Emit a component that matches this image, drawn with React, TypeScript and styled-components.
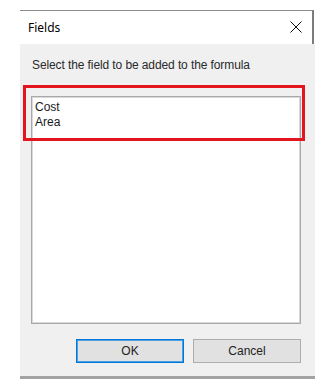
import React from "react";
import styled, { createGlobalStyle } from "styled-components";

const Global = createGlobalStyle`
  html, body { margin: 0; padding: 0; background: #ffffff; }
  body { width: 327px; height: 389px; overflow: hidden; }
`;

const Window = styled.div`
  margin: 10px 0 0 20px;
  width: 295px;
  display: flex;
  flex-direction: column;
`;

const TitleBar = styled.div`
  box-sizing: border-box;
  width: 294px;
  height: 34px;
  background: #ffffff;
  border-top: 1px solid #8c8c8c;
  border-right: 2px solid #7c7c7c;
  display: flex;
  align-items: flex-start;
  justify-content: space-between;
  padding: 8px 10px 0 8px;
`;

const Title = styled.span`
  font-family: "Noto Sans", "Liberation Sans", sans-serif;
  font-size: 12px;
  line-height: 17px;
  color: #000000;
`;

const CloseIcon = styled.svg`
  display: block;
  margin-top: 2px;
`;

const Body = styled.div`
  position: relative;
  box-sizing: border-box;
  height: 335px;
  background: #f0f0f0;
  border-bottom: 3px solid #a3a3a3;
  display: flex;
  flex-direction: column;
  padding: 15px 14px 0 11px;
`;

const Prompt = styled.div`
  font-family: "Liberation Sans", Arial, sans-serif;
  font-size: 12px;
  letter-spacing: -0.1px;
  line-height: 13px;
  color: #2a2a2a;
  padding-left: 1px;
`;

const ListBox = styled.div`
  box-sizing: border-box;
  margin-top: 24px;
  width: 270px;
  height: 228px;
  background: #ffffff;
  border: 1px solid #a9a9a9;
  box-shadow: inset 0 0 0 1px #d9d9d9;
  padding: 3px 3px;
  display: flex;
  flex-direction: column;
`;

const ListItem = styled.div`
  font-family: "Liberation Sans", Arial, sans-serif;
  font-size: 12px;
  line-height: 15px;
  color: #1a1a1a;
`;

const ButtonRow = styled.div`
  display: flex;
  justify-content: flex-end;
  gap: 9px;
  margin-top: 15px;
  width: 270px;
`;

const Button = styled.button<{ $default?: boolean }>`
  box-sizing: border-box;
  width: 108px;
  height: 24px;
  margin: 0;
  padding: 0;
  background: #e1e1e1;
  border: 1px solid ${(p) => (p.$default ? "#0078d7" : "#adadad")};
  box-shadow: ${(p) => (p.$default ? "inset 0 0 0 1px #4aa0e3" : "none")};
  font-family: "Liberation Sans", Arial, sans-serif;
  font-size: 12px;
  color: #222222;
  display: flex;
  align-items: center;
  justify-content: center;
`;

const Highlight = styled.div`
  position: absolute;
  left: 3px;
  top: 41px;
  width: 282px;
  height: 56px;
  box-sizing: border-box;
  border: 3px solid #e3151f;
  pointer-events: none;
`;

export default function App() {
  return (
    <>
      <Global />
      <Window>
        <TitleBar>
          <Title>Fields</Title>
          <CloseIcon width="12" height="12" viewBox="0 0 12 12">
            <path d="M0.5 0.5 L11.5 11.5 M11.5 0.5 L0.5 11.5" stroke="#111111" strokeWidth="1" fill="none" />
          </CloseIcon>
        </TitleBar>
        <Body>
          <Prompt>Select the field to be added to the formula</Prompt>
          <ListBox>
            <ListItem>Cost</ListItem>
            <ListItem>Area</ListItem>
          </ListBox>
          <ButtonRow>
            <Button $default>OK</Button>
            <Button>Cancel</Button>
          </ButtonRow>
          <Highlight />
        </Body>
      </Window>
    </>
  );
}
